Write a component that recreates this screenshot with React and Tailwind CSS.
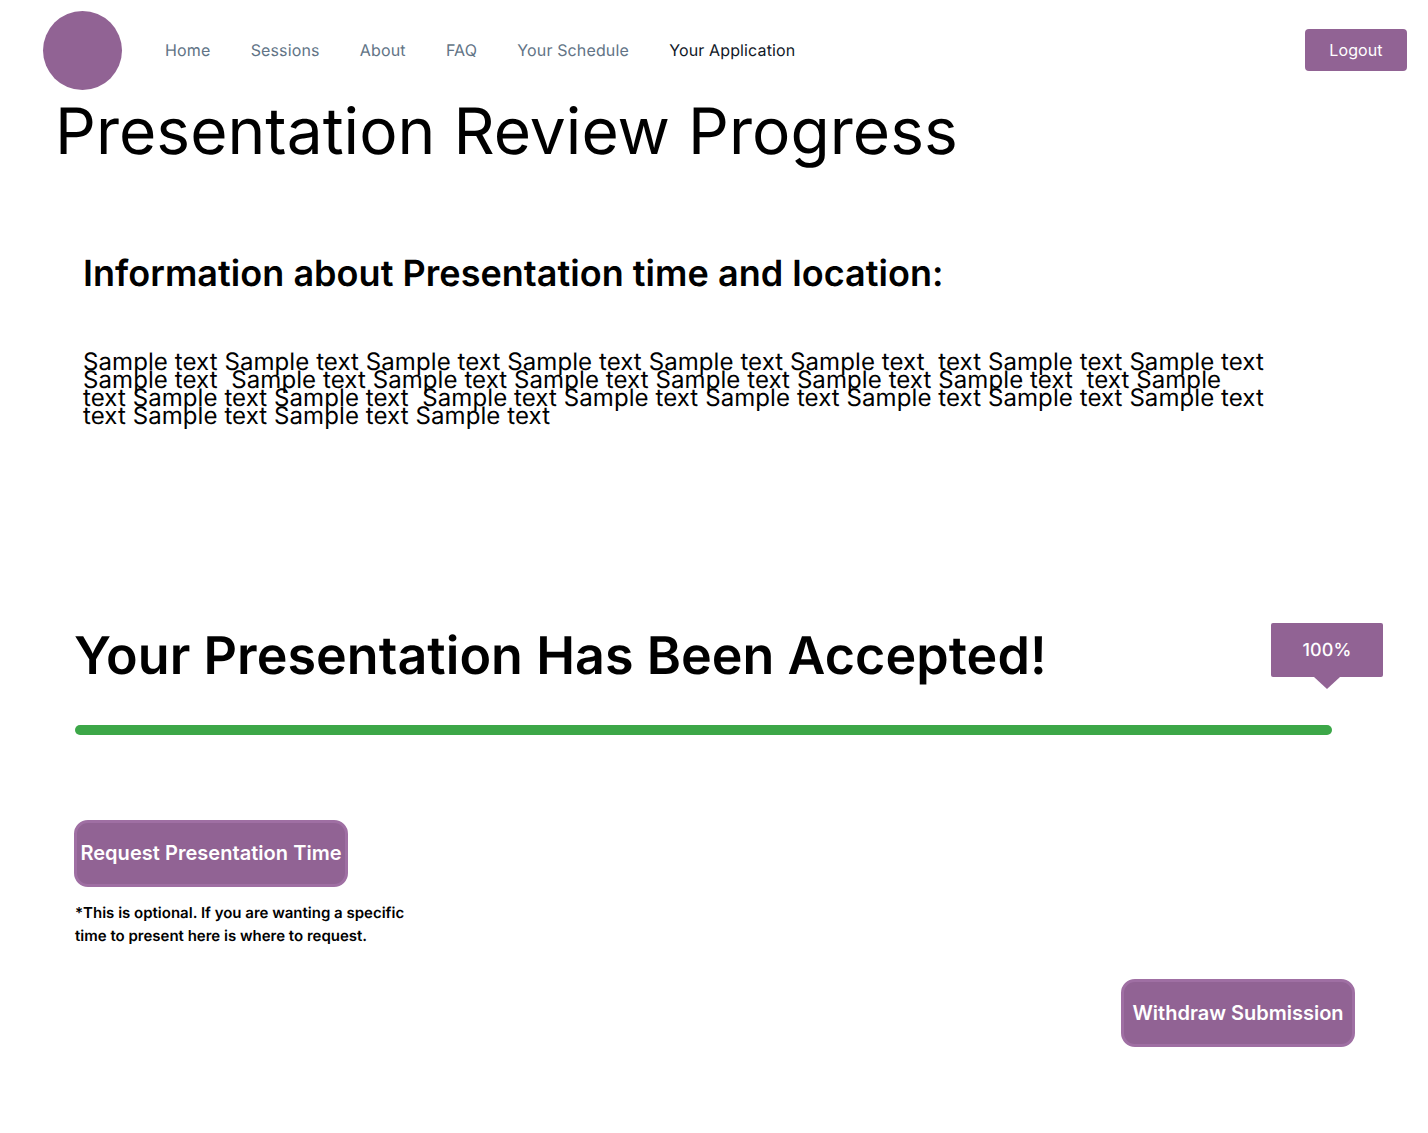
const line = "Sample text Sample text Sample text Sample text Sample text Sample text  text Sample text Sample text Sample text  Sample text Sample text Sample text Sample text Sample text Sample text  text Sample text Sample text Sample text  Sample text Sample text Sample text Sample text Sample text Sample text text Sample text Sample text Sample text";

export default function App() {
  const nav = ["Home", "Sessions", "About", "FAQ", "Your Schedule"];
  return (
    <div className="min-h-[1133px] bg-white text-black font-['Inter',sans-serif] [text-rendering:geometricPrecision] antialiased">
      <header className="flex h-[101px] items-center pl-[43px] pr-[21px]">
        <div className="h-[79px] w-[79px] rounded-full bg-[#916394]" />
        <nav className="ml-[43px] -mt-[2px] flex gap-[40.3px] text-base tracking-[0.13px] text-[#627486]">
          {nav.map((n) => <a key={n}>{n}</a>)}
          <a className="text-[#111827]">Your Application</a>
        </nav>
        <button className="ml-auto -mt-[2px] h-[42px] w-[102px] rounded bg-[#916394] text-base tracking-[0.1px] text-white">Logout</button>
      </header>
      <h1 className="ml-[55px] text-[64px] leading-[62px] font-normal tracking-[0.04px]">Presentation Review Progress</h1>
      <section className="ml-[83px] mt-[88px]">
        <h2 className="text-[36px] font-semibold leading-[44px] tracking-[0.04px]">Information about Presentation time and location:</h2>
        <p className="mt-[58px] w-[1185px] text-2xl leading-[18px] tracking-[0.085px] whitespace-pre-wrap">{line}</p>
      </section>
      <section className="mx-[75px] mt-[199px] relative">
        <h2 className="-ml-[1px] text-[52px] font-semibold leading-[64px] tracking-[0.055px]">Your Presentation Has Been Accepted!</h2>
        <div className="absolute left-[1196px] -top-[1px] flex h-[54px] w-[112px] items-center justify-center rounded-[2px] bg-[#916394] pt-[1px] text-lg font-medium tracking-[0.1px] text-white">
          100%
          <span className="absolute left-1/2 top-full h-0 w-0 -translate-x-1/2 border-x-[13px] border-t-[12px] border-x-transparent border-t-[#916394]" />
        </div>
        <div className="mt-[37px] h-[10px] w-[1257px] rounded-full bg-[#3ca748]" />
      </section>
      <section className="ml-[74px] mt-[85px]">
        <button className="h-[67px] w-[274px] rounded-[14px] border-[3px] border-[#9f6fa3] bg-[#916394] pb-[2px] text-xl font-semibold tracking-[0.04px] text-white">Request Presentation Time</button>
        <p className="ml-[1px] mt-[14px] w-[340px] text-[15px] leading-[23px] font-semibold">*This is optional. If you are wanting a specific time to present here is where to request.</p>
      </section>
      <div className="mt-[32px] flex justify-end pr-[73px]">
        <button className="h-[68px] w-[234px] rounded-[14px] border-[3px] border-[#9f6fa3] bg-[#916394] pb-[1px] text-xl font-semibold text-white">Withdraw Submission</button>
      </div>
    </div>
  );
}
